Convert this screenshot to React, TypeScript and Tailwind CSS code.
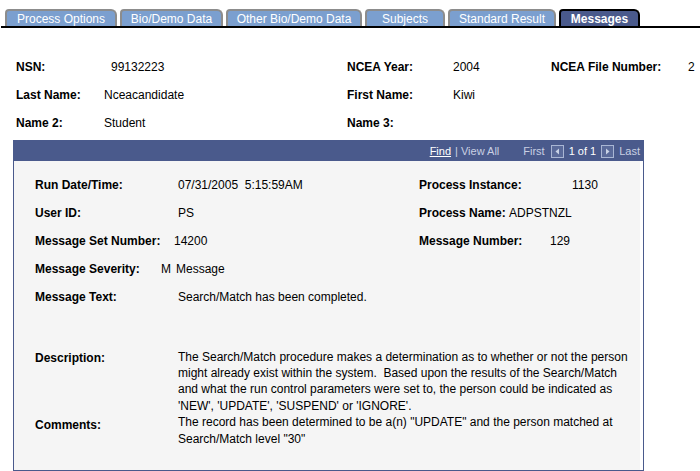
import React from 'react';

const tabs = [
  { label: 'Process Options', w: 'w-[112px]' },
  { label: 'Bio/Demo Data', w: 'w-[103px]' },
  { label: 'Other Bio/Demo Data', w: 'w-[136px]' },
  { label: 'Subjects', w: 'w-[80px]' },
  { label: 'Standard Result', w: 'w-[108px]' },
];

function NavBox({ dir }: { dir: 'left' | 'right' }) {
  return (
    <span className="inline-flex items-center justify-center w-[13px] h-[13px] border border-[#a9b6d4] bg-[#5a6a9a]">
      <svg width="7" height="7" viewBox="0 0 7 7">
        {dir === 'left' ? (
          <polygon points="5,0.5 5,6.5 1.5,3.5" fill="#c9d2e6" />
        ) : (
          <polygon points="2,0.5 2,6.5 5.5,3.5" fill="#c9d2e6" />
        )}
      </svg>
    </span>
  );
}

function Label({ children, className = '' }: { children: React.ReactNode; className?: string }) {
  return <span className={`font-bold text-black ${className}`}>{children}</span>;
}

export default function App() {
  return (
    <div
      className="w-[700px] h-[471px] bg-white text-[12px] text-black overflow-hidden"
      style={{ fontFamily: '"Liberation Sans", Arial, sans-serif' }}
    >
      {/* tab strip */}
      <div className="flex items-end pt-[9px] pl-[5px] gap-[3px] h-[26px]">
        {tabs.map((t) => (
          <div
            key={t.label}
            className={`${t.w} h-[17px] flex items-center justify-center bg-[#7b9fcf] text-white border-t-2 border-x-2 border-[#8c8c8c] rounded-tl-[4px] rounded-tr-[6px]`}
          >
            {t.label}
          </div>
        ))}
        <div className="w-[81px] h-[17px] flex items-center justify-center bg-[#4a5a8c] text-white font-bold border-t-2 border-x-2 border-black rounded-tl-[4px] rounded-tr-[6px]">
          Messages
        </div>
      </div>
      <div className="h-[2px] bg-black ml-[1px]" />

      {/* top fields */}
      <div className="mt-[26px] grid grid-cols-[88px_243px_106px_98px_137px_1fr] pl-[16px]">
        <div className="h-[27px] leading-[27px]"><Label>NSN:</Label></div>
        <div className="h-[27px] leading-[27px] pl-[7px]">99132223</div>
        <div className="h-[27px] leading-[27px]"><Label>NCEA Year:</Label></div>
        <div className="h-[27px] leading-[27px]">2004</div>
        <div className="h-[27px] leading-[27px]"><Label>NCEA File Number:</Label></div>
        <div className="h-[27px] leading-[27px]">2</div>

        <div className="h-[28px] leading-[28px]"><Label>Last Name:</Label></div>
        <div className="h-[28px] leading-[28px]">Nceacandidate</div>
        <div className="h-[28px] leading-[28px]"><Label>First Name:</Label></div>
        <div className="h-[28px] leading-[28px]">Kiwi</div>
        <div className="h-[28px]" />
        <div className="h-[28px]" />

        <div className="h-[28px] leading-[28px]"><Label>Name 2:</Label></div>
        <div className="h-[28px] leading-[28px]">Student</div>
        <div className="h-[28px] leading-[28px]"><Label>Name 3:</Label></div>
        <div className="h-[28px]" />
        <div className="h-[28px]" />
        <div className="h-[28px]" />
      </div>

      {/* message box */}
      <div className="mt-[3px] ml-[13px] w-[631px] h-[331px] border border-[#4a5a8c] flex flex-col">
        <div className="h-[20px] bg-[#4a5a8c] flex items-center justify-end pr-[3px] text-[11px] text-[#c9d0e3]">
          <span className="text-white underline">Find</span>
          <span className="ml-[4px]">| View All</span>
          <span className="ml-[24px]">First</span>
          <span className="ml-[6px]"><NavBox dir="left" /></span>
          <span className="ml-[5px] text-white">1 of 1</span>
          <span className="ml-[5px]"><NavBox dir="right" /></span>
          <span className="ml-[5px]">Last</span>
        </div>
        <div className="flex-1 bg-[#f5f5f5] mr-[3px] pt-[10px] pl-[21px]">
          <div className="grid grid-cols-[143px_241px_1fr]">
            <div className="h-[28px] leading-[28px]"><Label>Run Date/Time:</Label></div>
            <div className="h-[28px] leading-[28px] whitespace-pre">07/31/2005  5:15:59AM</div>
            <div className="h-[28px] leading-[28px] flex">
              <Label className="w-[153px]">Process Instance:</Label>
              <span>1130</span>
            </div>

            <div className="h-[28px] leading-[28px]"><Label>User ID:</Label></div>
            <div className="h-[28px] leading-[28px]">PS</div>
            <div className="h-[28px] leading-[28px] flex">
              <Label className="w-[90px]">Process Name:</Label>
              <span>ADPSTNZL</span>
            </div>

            <div className="h-[28px] leading-[28px]"><Label>Message Set Number:</Label></div>
            <div className="h-[28px] leading-[28px] -ml-[4px]">14200</div>
            <div className="h-[28px] leading-[28px] flex">
              <Label className="w-[131px]">Message Number:</Label>
              <span>129</span>
            </div>

            <div className="h-[29px] leading-[29px]"><Label>Message Severity:</Label></div>
            <div className="h-[29px] leading-[29px] -ml-[17px] flex gap-[5px]">
              <span>M</span>
              <span>Message</span>
            </div>
            <div className="h-[29px]" />

            <div className="h-[27px] leading-[27px]"><Label>Message Text:</Label></div>
            <div className="h-[27px] leading-[27px] col-span-2">Search/Match has been completed.</div>
          </div>

          <div className="mt-[38px] flex">
            <div className="w-[143px] shrink-0 pt-[1px] leading-[16px]"><Label>Description:</Label></div>
            <div className="leading-[16px] whitespace-nowrap">
              <div>The Search/Match procedure makes a determination as to whether or not the person</div>
              <div>might already exist within the system.&nbsp; Based upon the results of the Search/Match</div>
              <div>and what the run control parameters were set to, the person could be indicated as</div>
              <div className="mt-[1px]">'NEW', 'UPDATE', 'SUSPEND' or 'IGNORE'.</div>
            </div>
          </div>
          <div className="flex">
            <div className="w-[143px] shrink-0 pt-[3px] leading-[16px]"><Label>Comments:</Label></div>
            <div className="leading-[17px] whitespace-nowrap">
              <div>The record has been determined to be a(n) "UPDATE" and the person matched at</div>
              <div>Search/Match level "30"</div>
            </div>
          </div>
        </div>
      </div>
    </div>
  );
}
